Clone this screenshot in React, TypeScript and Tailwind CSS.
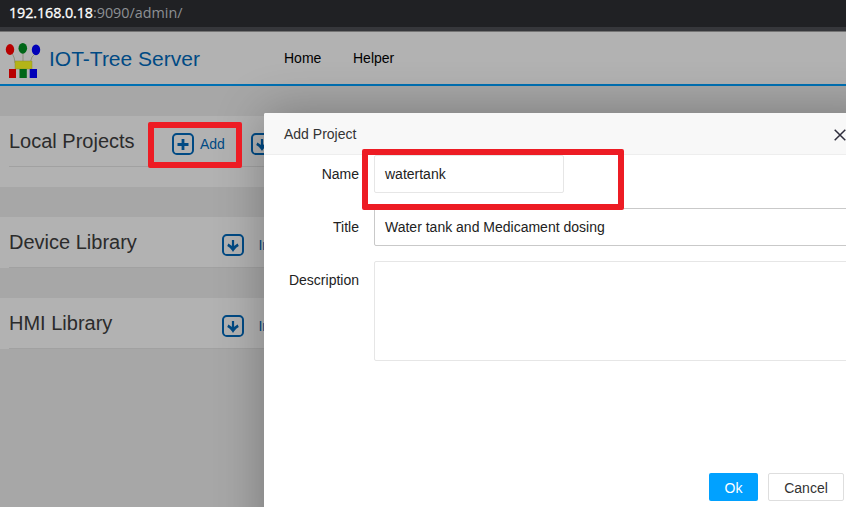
import type { ReactNode } from "react";

function BoxIcon({ children }: { children: ReactNode }) {
  return (
    <svg className="h-[22px] w-[22px] shrink-0" viewBox="0 0 22 22" fill="none" stroke="#004a84" strokeWidth="2">
      <rect x="1" y="1" width="20" height="20" rx="3.8" />
      {children}
    </svg>
  );
}

function PlusBox() {
  return (
    <BoxIcon>
      <path d="M11 6v11M5.5 11.5h11" strokeWidth="2.8" />
    </BoxIcon>
  );
}

function DownBox() {
  return (
    <BoxIcon>
      <path d="M11 6v10" strokeWidth="2.2" />
      <path d="M5.8 10.8q3 1.4 5.2 4.8q2.200-3.400 5.200-4.800" strokeWidth="2.6" />
    </BoxIcon>
  );
}

function Logo() {
  return (
    <svg className="h-[38px] w-[38px] shrink-0" viewBox="0 0 38 38">
      <g fill="none" stroke="#8f8f7c" strokeWidth="1">
        <path d="M7 12q3 5 3 10M18 12v9M31 12q-5 3-6 10" />
      </g>
      <ellipse cx="5" cy="8.500" rx="4.2" ry="5.4" fill="#b80000" />
      <ellipse cx="17.8" cy="7.3" rx="4.3" ry="5.4" fill="#006618" />
      <ellipse cx="31" cy="8.800" rx="4.2" ry="5.4" fill="#0000b8" />
      <path d="M10 20h17v8h-17z" fill="#b4b418" stroke="#8f8f30" strokeWidth=".5" />
      <path d="M4 28h7v9h-7z" fill="#b80000" />
      <path d="M14.5 28h7.3v9h-7.3z" fill="#006618" />
      <path d="M24.7 28h7.3v9h-7.3z" fill="#0000b8" />
    </svg>
  );
}

function Library({ name }: { name: string }) {
  return (
    <section className="mb-[30px] h-[51px] bg-[#b2b2b2] pl-[9px]">
      <div className="flex h-[51px] items-start border-b border-[#a1a1a1]">
        <h2 className="w-[213px] pt-[11px] text-[20px] leading-[28px] text-[#2b2b2b]">{name}</h2>
        <div className="flex items-center gap-[14.4px] pt-[17px] text-[14px] leading-[22px] text-[#004a84]">
          <DownBox />
          <span>Import</span>
        </div>
      </div>
    </section>
  );
}

function Row({ label, children }: { label: string; children: ReactNode }) {
  return (
    <div className="mb-[15px] flex">
      <label className="w-[110px] shrink-0 pr-[15px] pt-[9px] text-right leading-[20px]">{label}</label>
      {children}
    </div>
  );
}

function Dialog() {
  return (
    <div className="absolute left-[264px] top-[82px] flex h-[440px] w-[620px] flex-col rounded-[2px] bg-white text-[14px] text-[#222] shadow-[1px_1px_50px_rgba(0,0,0,0.3)]">
      <header className="flex h-[42px] shrink-0 items-center rounded-t-[2px] border-b border-[#eee] bg-[#f8f8f8] pl-5 text-[#333]">
        <span className="w-[550px] pt-[2px]">Add Project</span>
        <svg className="mt-[3px] h-3 w-3" viewBox="0 0 12 12" stroke="#2e2d3c" strokeWidth="1.5">
          <path d="M.7 .7l10.6 10.6M11.3 .7L.7 11.3" />
        </svg>
      </header>
      <div className="h-[318px] shrink-0">
        <Row label="Name">
          <div className="h-[38px] w-[190px] rounded-[2px] border border-[#e6e6e6] pl-[10px] leading-[36px]">watertank</div>
        </Row>
        <Row label="Title">
          <div className="h-[38px] flex-1 rounded-[2px] border border-[#c9c9c9] pl-[10px] leading-[36px]">Water tank and Medicament dosing</div>
        </Row>
        <Row label="Description">
          <div className="h-[100px] flex-1 rounded-[2px] border border-[#e6e6e6]" />
        </Row>
      </div>
      <footer className="flex gap-[10px] pl-[445px]">
        <button className="h-[28px] w-[49px] rounded-[2px] bg-[#01a1ff] pt-[2px] leading-[26px] text-white">Ok</button>
        <button className="h-[28px] w-[76px] rounded-[2px] border border-[#dedede] bg-white pt-px leading-[26px] text-[#333]">Cancel</button>
      </footer>
    </div>
  );
}

export default function App() {
  return (
    <div className="relative flex h-[507px] w-[846px] flex-col overflow-hidden bg-[#a7a7a7] font-['Liberation_Sans',Arial,sans-serif]">
      <div className="h-[27px] shrink-0 bg-[#202124] pl-[9px] font-['Open_Sans','Noto_Sans',sans-serif] text-[14.35px] leading-[26px] text-[#8d9094]">
        <span className="tracking-[-0.1px] text-white [-webkit-text-stroke:0.3px_white]">192.168.0.18</span>:9090/admin/
      </div>
      <div className="h-1 shrink-0 bg-[#36373b]" />
      <main className="relative flex-1 overflow-hidden">
        <nav className="flex h-[55px] items-center border-b-2 border-t border-b-[#0070b3] border-t-[#747474] bg-[#b2b2b2] pl-[5px]">
          <div className="pt-[3px]"><Logo /></div>
          <span className="ml-[6px] w-[235px] pt-[2px] text-[21px] text-[#004a84]">IOT-Tree Server</span>
          <span className="w-[69px] text-[14px] text-black">Home</span>
          <span className="text-[14px] text-black">Helper</span>
        </nav>
        <section className="mb-[30px] mt-[30px] h-[71px] bg-[#b2b2b2] pl-[9px]">
          <div className="flex h-[51px] items-start border-b border-[#a1a1a1]">
            <h2 className="w-[163px] pt-[11px] text-[20px] leading-[28px] text-[#2b2b2b]">Local Projects</h2>
            <div className="flex items-center pt-[17px] text-[14px] leading-[22px] text-[#004a84]">
              <PlusBox />
              <span className="ml-[6px] mr-[26px]">Add</span>
              <DownBox />
            </div>
          </div>
        </section>
        <Library name="Device Library" />
        <Library name="HMI Library" />
        <Dialog />
      </main>
      <div className="absolute left-[148px] top-[122px] h-[46px] w-[94px] rounded-[2px] border-[6px] border-[#ed1c24]" />
      <div className="absolute left-[362px] top-[149px] h-[61px] w-[262px] rounded-[2px] border-[6px] border-[#ed1c24]" />
    </div>
  );
}
